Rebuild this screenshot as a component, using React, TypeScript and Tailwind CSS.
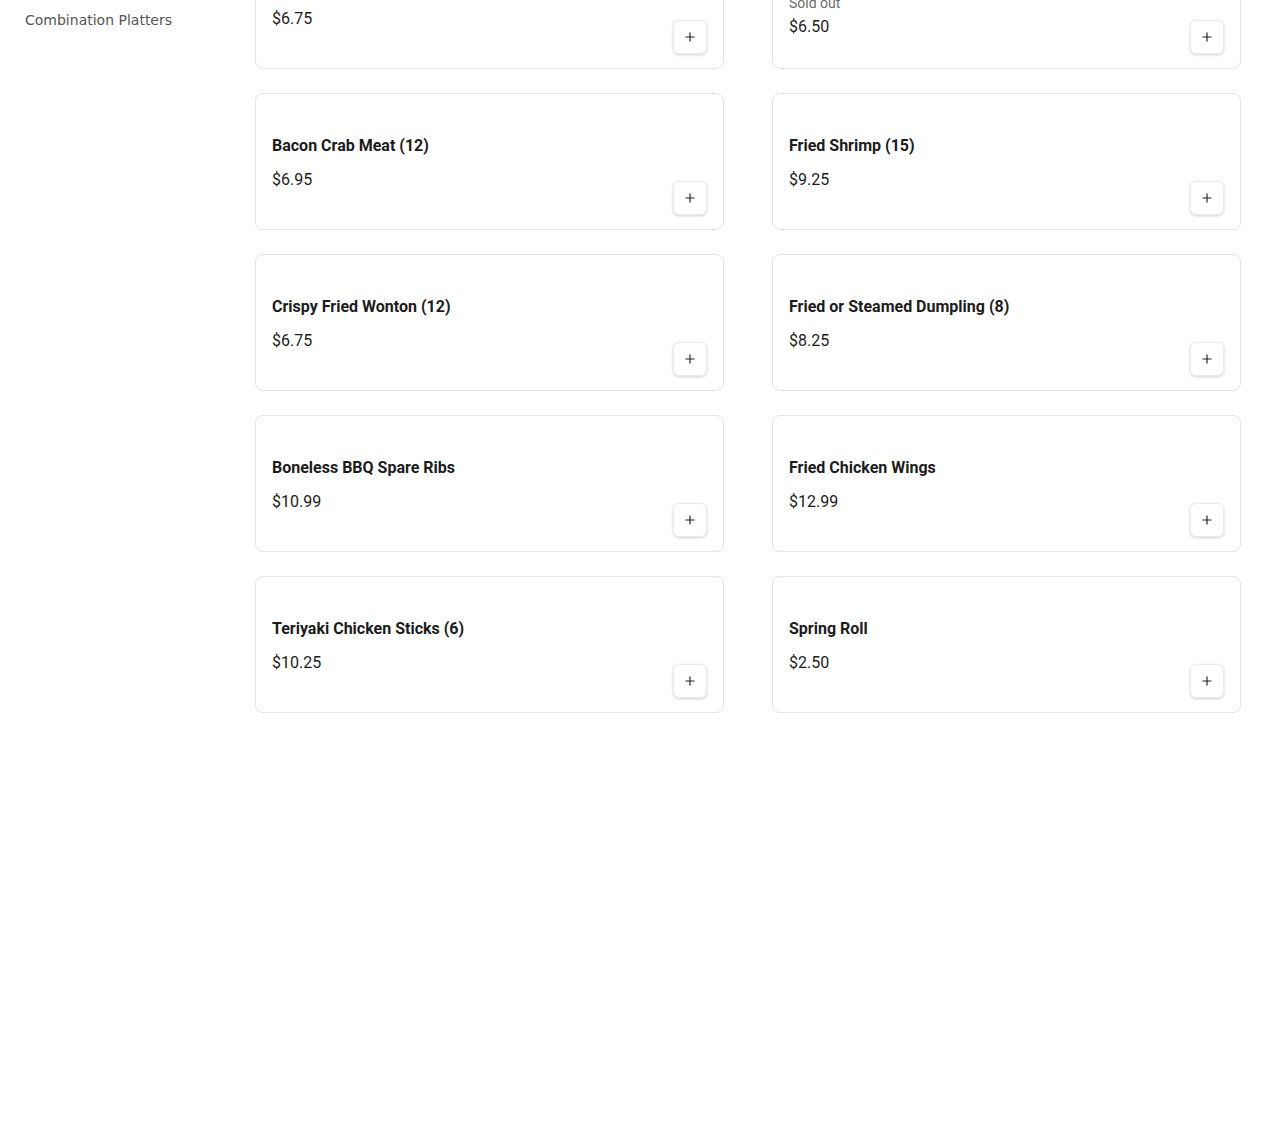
import { Plus } from "lucide-react";

type Item = { name: string; price: string; soldOut?: boolean };

const items: Item[] = [
  { name: "Egg Roll (2)", price: "$6.75" },
  { name: "Crab Rangoon (10)", price: "$6.50", soldOut: true },
  { name: "Bacon Crab Meat (12)", price: "$6.95" },
  { name: "Fried Shrimp (15)", price: "$9.25" },
  { name: "Crispy Fried Wonton (12)", price: "$6.75" },
  { name: "Fried or Steamed Dumpling (8)", price: "$8.25" },
  { name: "Boneless BBQ Spare Ribs", price: "$10.99" },
  { name: "Fried Chicken Wings", price: "$12.99" },
  { name: "Teriyaki Chicken Sticks (6)", price: "$10.25" },
  { name: "Spring Roll", price: "$2.50" },
];

function MenuCard({ item }: { item: Item }) {
  return (
    <div className="relative flex h-[137px] flex-col justify-center rounded-lg border border-[#e4e4e4] bg-white px-4 pt-[3px]">
      <div className="font-['Roboto',sans-serif] text-base font-bold leading-6 text-[#1c1c1c]">
        {item.name}
      </div>
      {item.soldOut && (
        <div className="mt-[6px] font-['Roboto',sans-serif] text-sm leading-4 text-[#6b6b6b]">Sold out</div>
      )}
      <div
        className={
          item.soldOut
            ? "mt-1 font-['Roboto',sans-serif] text-base leading-6 text-[#1c1c1c]"
            : "mt-[10px] font-['Roboto',sans-serif] text-base leading-6 text-[#1c1c1c]"
        }
      >
        {item.price}
      </div>
      <button className="absolute bottom-[14px] right-4 flex h-[34px] w-[34px] items-center justify-center rounded-md border border-[#ececec] bg-white text-[#222] shadow-[0_1px_3px_rgba(0,0,0,0.18)]">
        <Plus size={14} strokeWidth={2} />
      </button>
    </div>
  );
}

export default function App() {
  return (
    <div className="flex min-h-[1121px] w-[1270px] overflow-hidden bg-white">
      <aside className="w-[255px] shrink-0 pl-[25px] pt-[10px]">
        <div className="font-['DejaVu_Sans',sans-serif] text-sm leading-5 text-[#555]">
          Combination Platters
        </div>
      </aside>
      <main className="flex-1 pr-[29px]">
        <div className="-mt-[68px] grid grid-cols-2 gap-x-12 gap-y-6">
          {items.map((item) => (
            <MenuCard key={item.name} item={item} />
          ))}
        </div>
      </main>
    </div>
  );
}
